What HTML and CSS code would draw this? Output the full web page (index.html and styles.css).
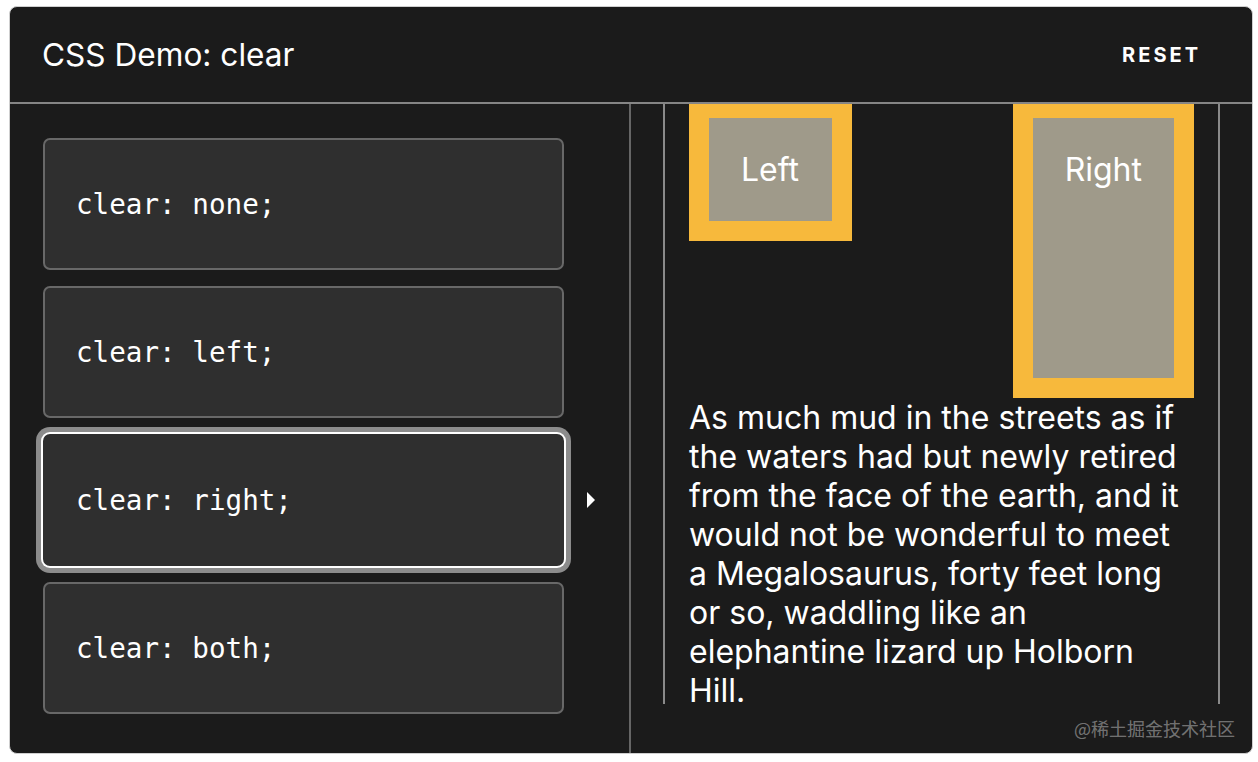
FILE: index.html
```html
<!DOCTYPE html>
<html lang="en">
<head>
<meta charset="utf-8">
<title>CSS Demo: clear</title>
<link rel="stylesheet" href="styles.css">
</head>
<body>
<div class="demo">
  <header class="demo-header">
    <h4 class="demo-title">CSS Demo: clear</h4>
    <button class="reset" type="button">RESET</button>
  </header>
  <div class="demo-body">
    <div class="choices">
      <div class="choice-row">
        <div class="choice"><code>clear: none;</code></div>
        <span class="arrow-slot"></span>
      </div>
      <div class="choice-row">
        <div class="choice"><code>clear: left;</code></div>
        <span class="arrow-slot"></span>
      </div>
      <div class="choice-row">
        <div class="choice selected"><code>clear: right;</code></div>
        <span class="arrow-slot"><span class="arrow"></span></span>
      </div>
      <div class="choice-row">
        <div class="choice"><code>clear: both;</code></div>
        <span class="arrow-slot"></span>
      </div>
    </div>
    <div class="output-pane">
      <section class="output">
        <div class="example-container">
          <div class="floated-left">Left</div>
          <div class="floated-right">Right</div>
          <p class="example-element">As much mud in the streets as if the waters had but newly retired from the face of the earth, and it would not be wonderful to meet a Megalosaurus, forty feet long or so, waddling like an elephantine lizard up Holborn Hill.</p>
        </div>
      </section>
    </div>
  </div>
  <span class="watermark">@稀土掘金技术社区</span>
</div>
</body>
</html>
```
FILE: styles.css
```css
html, body {
  margin: 0;
  padding: 0;
  background: #ffffff;
}

body {
  padding: 6px 0 0 9px;
  font-family: Inter, "Noto Sans", sans-serif;
}

.demo {
  position: relative;
  box-sizing: border-box;
  width: 1244px;
  height: 748px;
  border: 1px solid #cfcfcf;
  border-radius: 8px;
  background: #1b1b1b;
  overflow: hidden;
  display: flex;
  flex-direction: column;
}

.demo-header {
  box-sizing: border-box;
  height: 97px;
  flex: none;
  display: flex;
  align-items: center;
  justify-content: space-between;
  padding: 0 51px 0 32px;
  border-bottom: 2px solid #858585;
}

.demo-title {
  margin: 0;
  font-family: Inter, sans-serif;
  font-size: 31.6px;
  font-weight: 400;
  color: #ffffff;
  line-height: 1;
}

.reset {
  background: none;
  border: none;
  padding: 0;
  font-family: Inter, sans-serif;
  font-size: 20px;
  font-weight: 700;
  letter-spacing: 3px;
  color: #ffffff;
  line-height: 1;
}

.demo-body {
  flex: 1;
  display: flex;
  min-height: 0;
}

.choices {
  box-sizing: border-box;
  width: 621px;
  flex: none;
  border-right: 2px solid #666666;
  padding: 34px 0 0 33px;
  display: flex;
  flex-direction: column;
  gap: 16px;
}

.choice-row {
  display: flex;
  align-items: center;
  gap: 23px;
}

.choice {
  box-sizing: border-box;
  width: 521px;
  height: 132px;
  border: 2px solid #686868;
  border-radius: 7px;
  background: #2f2f2f;
  display: flex;
  align-items: center;
  padding-left: 31px;
}

.choice code {
  font-family: "DejaVu Sans Mono", "Liberation Mono", monospace;
  font-size: 27.6px;
  color: #ffffff;
}

.choice.selected {
  border-color: transparent;
  box-shadow: 0 0 0 2px #ffffff, 0 0 0 7px #8c8c8c;
}

.arrow-slot {
  width: 8px;
  height: 16px;
  display: flex;
}

.arrow {
  width: 0;
  height: 0;
  border-left: 8px solid #ffffff;
  border-top: 8px solid transparent;
  border-bottom: 8px solid transparent;
}

.output-pane {
  flex: 1;
  padding: 0 32px;
}

.output {
  box-sizing: border-box;
  height: 600px;
  border-left: 2px solid #8a8a8a;
  border-right: 2px solid #8a8a8a;
  padding: 0 24px;
  display: flex;
  flex-direction: column;
  justify-content: center;
  overflow: hidden;
}

.example-container {
  font-family: Inter, sans-serif;
  font-size: 32px;
  line-height: normal;
  color: #ffffff;
}

.floated-left,
.floated-right {
  border: 20px solid #f7b93c;
  background: #9f9a8a;
  padding: 32px;
}

.floated-left {
  float: left;
  padding-right: 33px;
}

.floated-right {
  float: right;
  height: 196px;
}

.example-element {
  margin: 0;
  clear: right;
}

.watermark {
  position: absolute;
  right: 17px;
  bottom: 12px;
  font-family: "Noto Sans CJK SC", sans-serif;
  font-size: 18px;
  line-height: 26px;
  color: rgba(255, 255, 255, 0.4);
}
```
